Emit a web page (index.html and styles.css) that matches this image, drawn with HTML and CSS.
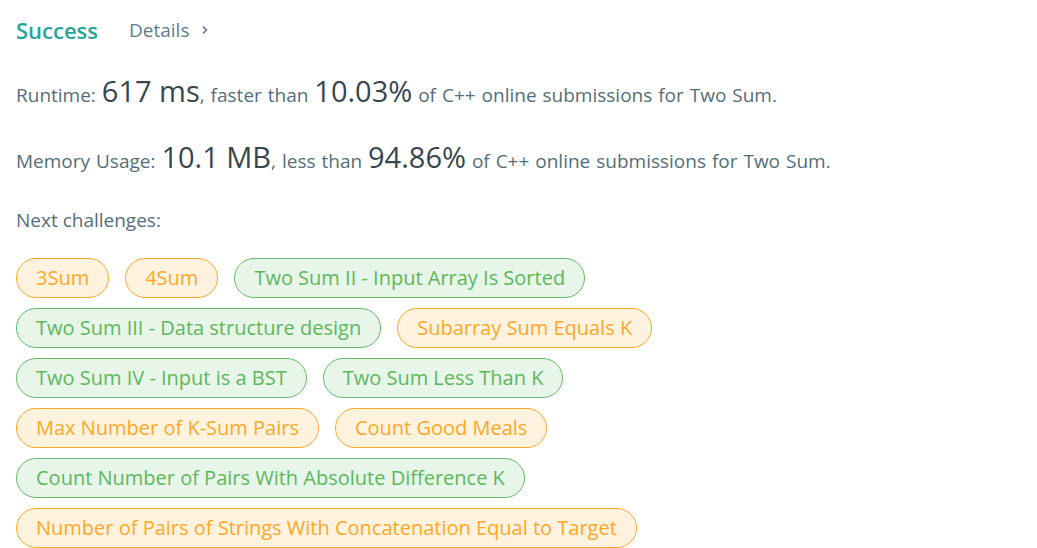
FILE: index.html
```html
<!DOCTYPE html>
<html lang="en">
<head>
  <meta charset="utf-8"/>
  <title>Submission Result</title>
  <link rel="stylesheet" href="styles.css">
</head>
<body>
  <div class="result-head">
    <span class="status">Success</span>
    <a class="details" href="#">Details
      <svg width="12" height="12" viewBox="0 0 12 12"><path d="M4 2.5 L7.5 6 L4 9.5" fill="none" stroke="currentColor" stroke-width="1.6"/></svg>
    </a>
  </div>

  <p class="stat">Runtime: <span class="big">617 ms</span>, faster than <span class="big">10.03%</span> of C++ online submissions for Two Sum.</p>
  <p class="stat">Memory Usage: <span class="big">10.1 MB</span>, less than <span class="big">94.86%</span> of C++ online submissions for Two Sum.</p>

  <p class="next">Next challenges:</p>
  <div class="tags">
    <a class="tag medium" href="#">3Sum</a>
    <a class="tag medium" href="#">4Sum</a>
    <a class="tag easy" href="#">Two Sum II - Input Array Is Sorted</a>
    <a class="tag easy" href="#">Two Sum III - Data structure design</a>
    <a class="tag medium" href="#">Subarray Sum Equals K</a>
    <a class="tag easy" href="#">Two Sum IV - Input is a BST</a>
    <a class="tag easy" href="#">Two Sum Less Than K</a>
    <a class="tag medium" href="#">Max Number of K-Sum Pairs</a>
    <a class="tag medium" href="#">Count Good Meals</a>
    <a class="tag easy" href="#">Count Number of Pairs With Absolute Difference K</a>
    <a class="tag medium" href="#">Number of Pairs of Strings With Concatenation Equal to Target</a>
  </div>
</body>
</html>
```

FILE: styles.css
```css
body {
  margin: 0;
  padding: 14px 16px;
  font-family: 'Open Sans', 'Noto Sans', sans-serif;
  color: #546e7a;
  background: #fff;
}
.result-head {
  display: flex;
  align-items: center;
  gap: 31px;
  height: 32px;
}
.status {
  color: #26a69a;
  font-size: 22px;
  font-weight: 600;
}
.details {
  color: #607d8b;
  font-size: 19px;
  text-decoration: none;
  display: inline-flex;
  align-items: center;
  gap: 10px;
}
.stat {
  margin: 25px 0 0;
  font-size: 19px;
  line-height: 40px;
  word-spacing: 1px;
  color: #546e7a;
}
.stat + .stat {
  margin-top: 22px;
}
.big {
  font-size: 29px;
  word-spacing: 0;
  color: #37474f;
}
.next {
  margin: 27px 0 26px;
  font-size: 19px;
  line-height: 24px;
}
.tags {
  display: flex;
  flex-wrap: wrap;
  gap: 10px 16px;
  width: 700px;
}
.tag {
  height: 40px;
  box-sizing: border-box;
  padding: 0 19px;
  border-radius: 20px;
  border: 1px solid;
  font-size: 20px;
  line-height: 38px;
  text-decoration: none;
  white-space: nowrap;
}
.medium {
  color: #ffa726;
  background: #fff3e0;
  border-color: #ffa726;
}
.easy {
  color: #5cb85c;
  background: #e8f5e9;
  border-color: #66bb6a;
}
```
